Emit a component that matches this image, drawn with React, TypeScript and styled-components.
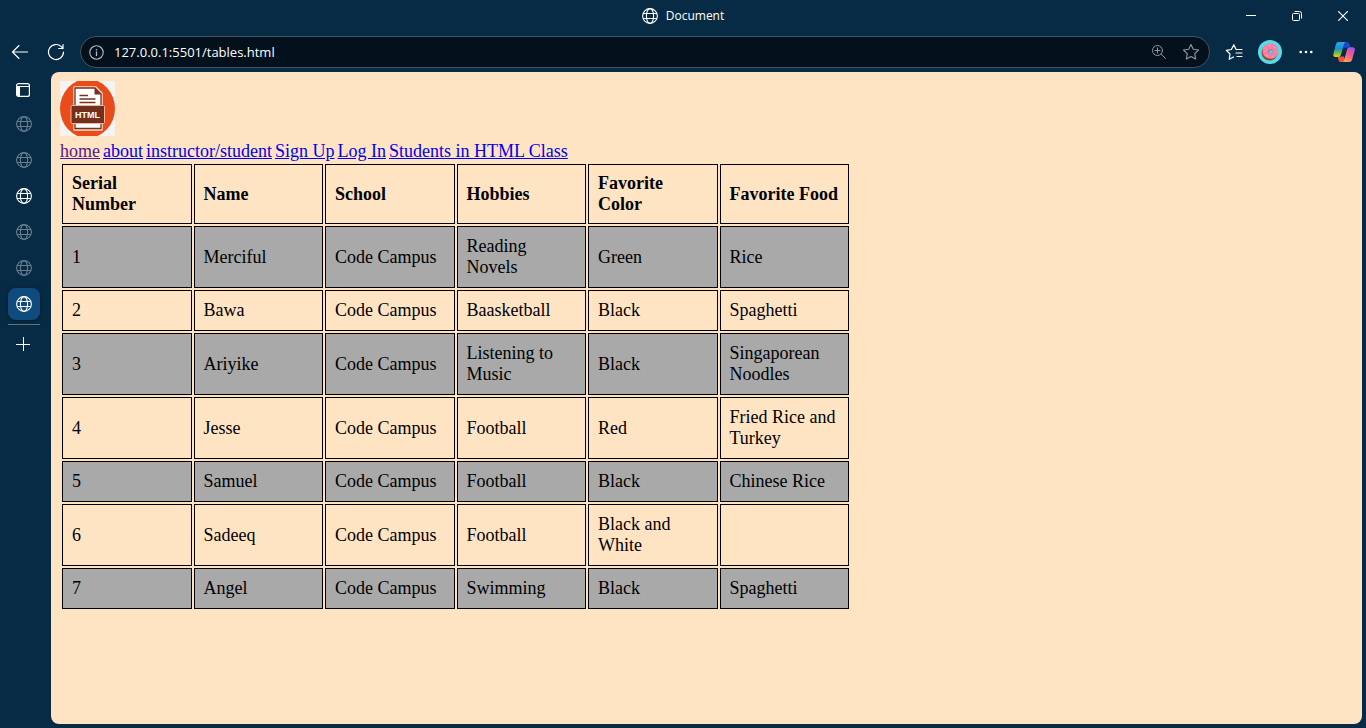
import React from "react";
import styled, { createGlobalStyle } from "styled-components";

const GlobalStyle = createGlobalStyle`
  *, *::before, *::after { box-sizing: border-box; }
  body {
    margin: 0;
    background: #082b45;
    font-family: "Open Sans", "Noto Sans", sans-serif;
  }
`;

const Window = styled.div`
  display: flex;
  flex-direction: column;
  min-height: 100vh;
  background: #082b45;
  color: #fff;
`;

const TitleBar = styled.header`
  display: grid;
  grid-template-columns: 1fr auto 1fr;
  align-items: center;
  height: 32px;
`;

const Title = styled.div`
  grid-column: 2;
  display: flex;
  align-items: center;
  gap: 8px;
  font-size: 12px;
  line-height: 16px;
`;

const WindowControls = styled.div`
  display: flex;
  justify-content: flex-end;
`;

const IconButton = styled.button<{ $width?: number; $height?: number; $dim?: boolean }>`
  display: flex;
  flex: none;
  align-items: center;
  justify-content: center;
  width: ${(p) => p.$width ?? 36}px;
  height: ${(p) => p.$height ?? 32}px;
  padding: 0;
  border: 0;
  background: none;
  color: ${(p) => (p.$dim ? "#90989f" : "#fff")};
`;

const Toolbar = styled.div`
  display: flex;
  align-items: center;
  height: 40px;
  padding: 0 2px;
`;

const AddressBar = styled.div`
  display: flex;
  flex: 1;
  align-items: center;
  min-width: 0;
  height: 32px;
  margin: 0 6px;
  padding: 0 2px 0 0;
  border: 1px solid #48535d;
  border-radius: 16px;
  background: #03111d;
`;

const AddressInput = styled.input`
  flex: 1;
  min-width: 0;
  padding: 0 3px;
  border: 0;
  outline: 0;
  background: none;
  color: #fff;
  font-family: inherit;
  font-size: 13px;
  line-height: 20px;
`;

const Body = styled.div`
  display: flex;
  flex: 1;
  padding: 0 4px 4px 0;
`;

const Sidebar = styled.nav`
  display: flex;
  flex: none;
  flex-direction: column;
  width: 51px;
  padding: 0 11px 0 8px;
`;

const TabList = styled.div`
  display: flex;
  flex-direction: column;
  gap: 4px;
  padding-bottom: 4px;
  border-bottom: 1px solid #647685;
`;

const Tab = styled.button<{ $state: "asleep" | "awake" | "active" }>`
  display: flex;
  align-items: center;
  justify-content: center;
  height: 32px;
  padding: 0;
  border: 0;
  border-radius: 8px;
  background: ${(p) => (p.$state === "active" ? "#0f4c7d" : "none")};
  box-shadow: ${(p) => (p.$state === "active" ? "0 1px 4px #041a2b" : "none")};
  color: ${(p) => (p.$state === "asleep" ? "#667e8f" : "#fff")};
`;

const Page = styled.main`
  flex: 1;
  min-width: 0;
  padding: 9px;
  border-radius: 8px;
  background: #ffe4c4;
  color: #000;
  font-family: "Liberation Serif", serif;
  font-size: 18px;
  line-height: 21px;
`;

const Logo = styled.svg`
  display: block;
  width: 55px;
  height: 55px;
  margin-bottom: 5px;
`;

const Links = styled.nav`
  display: flex;
  flex-wrap: wrap;
  gap: 3px;
`;

const PageLink = styled.a<{ $visited?: boolean }>`
  color: ${(p) => (p.$visited ? "#551a8b" : "#0000ee")};
  text-decoration: underline;
`;

const Table = styled.table`
  width: 791px;
  max-width: 100%;
  table-layout: fixed;
  border-collapse: separate;
  border-spacing: 2px;
  text-align: left;
`;

const HeadCell = styled.th`
  padding: 8px 8px 8px 9px;
  border: 1px solid #000;
  font-weight: 700;
`;

const Cell = styled.td`
  padding: 9px 8px 9px 9px;
  border: 1px solid #000;
`;

const Row = styled.tr`
  &:nth-child(odd) ${Cell} {
    background: #a9a9a9;
  }
`;

const GlobeIcon = () => (
  <svg width="16" height="16" viewBox="0 0 16 16" fill="none" stroke="currentColor" strokeWidth="1.1">
    <circle cx="8" cy="8" r="7.4" />
    <ellipse cx="8" cy="8" rx="3.6" ry="7.4" />
    <path d="M1 5.5h14M1 10.5h14" />
  </svg>
);

const BackIcon = () => (
  <svg width="18" height="16" viewBox="0 0 18 16" fill="none" stroke="currentColor" strokeWidth="1.1" strokeLinecap="round" strokeLinejoin="round">
    <path d="M16.5 8H1.5M8 1.500L1.500 8 8 14.500" />
  </svg>
);

const ReloadIcon = () => (
  <svg width="18" height="18" viewBox="0 0 18 18" fill="none" stroke="currentColor" strokeWidth="1.2" strokeLinecap="round" strokeLinejoin="round">
    <path d="M16.500 9A7.500 7.500 0 1 1 14.300 3.700L16 5.500M16 1.500v4h-4.300" />
  </svg>
);

const InfoIcon = () => (
  <svg width="15" height="15" viewBox="0 0 15 15" fill="none" stroke="#b8bec3" strokeLinecap="round">
    <circle cx="7.5" cy="7.5" r="6.7" strokeWidth="1.1" />
    <path d="M7.5 6.9v3.6" strokeWidth="1.3" />
    <circle cx="7.5" cy="4.7" r=".8" fill="#b8bec3" stroke="none" />
  </svg>
);

const ZoomIcon = () => (
  <svg width="16" height="16" viewBox="0 0 16 16" fill="none" stroke="currentColor" strokeLinecap="round">
    <circle cx="6.5" cy="6.5" r="5" />
    <path d="M6.5 4v5M4 6.5h5M10.200 10.200l4.300 4.300" />
  </svg>
);

const StarIcon = () => (
  <svg width="18" height="18" viewBox="0 0 18 18" fill="none" stroke="currentColor" strokeLinejoin="round" strokeWidth="1.1">
    <path d="M9 1.500l2.300 4.800 5.200.7-3.800 3.700.9 5.300L9 13.500 4.400 16l.9-5.300L1.500 7l5.200-.7z" />
  </svg>
);

const FavoritesIcon = () => (
  <svg width="18" height="18" viewBox="0 0 18 18" fill="none" stroke="currentColor" strokeWidth="1.2" strokeLinecap="round" strokeLinejoin="round">
    <path d="M8.500 14L4.200 16.300l.8-5.300L1.200 7.300l5.200-.8L8.800 1.700l2.300 4.800h5.900M11 10h6M12 13.500h5" />
  </svg>
);

const DonutAvatar = () => (
  <svg width="24" height="24" viewBox="0 0 24 24">
    <circle cx="12" cy="12" r="12" fill="#58dbe8" />
    <ellipse cx="11.6" cy="12.7" rx="8" ry="7.9" fill="#8e4d2a" />
    <path d="M4.500 11c0-4.500 3.400-7.500 8-7.500s7.800 3.300 7.800 7.800-3.100 7.500-7.200 7.400C8.500 18.700 4.500 16 4.500 11z" fill="#f47ea6" />
    <ellipse cx="12.7" cy="11.5" rx="2.6" ry="2.2" fill="#b9617a" />
    <ellipse cx="13" cy="11.9" rx="2.2" ry="1.800" fill="#4bd3df" />
    <path d="M7 8l1 .7M11 5.700l1-.3M16 7l.7.8M6.500 12l.5-1M17.500 12l.8-.5M8.500 15.500l1 .3M14 17l1-.5" stroke="#ffb4cb" strokeWidth=".8" strokeLinecap="round" />
  </svg>
);

const MoreIcon = () => (
  <svg width="14" height="4" viewBox="0 0 14 4" fill="currentColor">
    <circle cx="1.7" cy="2" r="1.3" />
    <circle cx="7" cy="2" r="1.3" />
    <circle cx="12.3" cy="2" r="1.3" />
  </svg>
);

const CopilotIcon = () => (
  <svg width="22" height="20" viewBox="0 0 22 20">
    <defs>
      <linearGradient id="coolRibbon" x1="0" y1="0" x2="0" y2="1">
        <stop offset="0" stopColor="#27a5ef" />
        <stop offset=".45" stopColor="#1d91cf" />
        <stop offset=".7" stopColor="#62b94e" />
        <stop offset="1" stopColor="#f4cd17" />
      </linearGradient>
      <linearGradient id="warmRibbon" x1=".7" y1="0" x2=".2" y2="1">
        <stop offset="0" stopColor="#a653e8" />
        <stop offset=".45" stopColor="#ef5b96" />
        <stop offset="1" stopColor="#ffa552" />
      </linearGradient>
    </defs>
    <path d="M9 0h5c1.600 0 2.200 1 2.600 2.300l.9 3.200h-3.500L10.500 6z" fill="#1748ce" />
    <path d="M5 14.500h6L12.500 20H8c-1.600 0-2.300-1-2.700-2.600z" fill="#ed533e" />
    <path d="M5.500 0h6.800c-.8.6-1.200 1.500-1.600 2.900L8.300 11.500C7.700 13.600 7 15 4.800 15H2.500C.5 15 0 13.500.5 11.500L2.700 3C3.200 1 4 0 5.500 0z" fill="url(#coolRibbon)" />
    <path d="M16.500 20H9.800c.9-.6 1.300-1.500 1.700-2.900l2.300-8.600C14.300 6.500 15 5.300 17 5.300h2.500c2 0 2.800 1.300 2.200 3.300L19.300 17c-.6 2-1.300 3-2.800 3z" fill="url(#warmRibbon)" />
  </svg>
);

const MinimizeIcon = () => (
  <svg width="10" height="10" viewBox="0 0 10 10" stroke="currentColor"><path d="M0 4.500h10" /></svg>
);

const RestoreIcon = () => (
  <svg width="10" height="10" viewBox="0 0 10 10" fill="none" stroke="currentColor">
    <rect x=".5" y="2.500" width="7" height="7" rx="1" />
    <path d="M2.500.5H7.500a2 2 0 0 1 2 2v5" />
  </svg>
);

const CloseIcon = () => (
  <svg width="10" height="10" viewBox="0 0 10 10" stroke="currentColor" strokeWidth="1.1"><path d="M0 0l10 10M10 0L0 10" /></svg>
);

const PanelIcon = () => (
  <svg width="14" height="14" viewBox="0 0 14 14" fill="none" stroke="currentColor">
    <rect x=".6" y=".6" width="12.8" height="12.8" rx="2" strokeWidth="1.2" />
    <path d="M4 3.500h9.500" />
    <path d="M1 3h3v10.500H2.500A1.500 1.500 0 0 1 1 12z" fill="currentColor" stroke="none" />
  </svg>
);

const PlusIcon = () => (
  <svg width="14" height="14" viewBox="0 0 14 14" stroke="currentColor"><path d="M0 7.500h14M7.500 0v14" /></svg>
);

const HtmlLogo = () => (
  <Logo viewBox="0 0 55 55" role="img" aria-label="HTML document">
    <rect width="55" height="55" fill="#f5f3f2" />
    <ellipse cx="27.5" cy="27.5" rx="27.5" ry="29.5" fill="#e84c1a" />
    <path d="M14.500 6.500h21l6 6V48.500h-27z" fill="#fff" stroke="#ffd8c5" strokeWidth="2.5" strokeLinejoin="round" />
    <path d="M15 7h20l6 6v34.500H15z" fill="#fff" stroke="#74301d" strokeWidth="1.3" />
    <path d="M34.500 7v6.500H41z" fill="#74301d" />
    <path d="M20 14.500h7.500M20 18h15M20 21.500h15" stroke="#74301d" strokeWidth="1.3" strokeLinecap="round" />
    <rect x="11" y="24.500" width="33.500" height="18" rx="1" fill="#74301d" stroke="#f4b69e" />
    <text x="27.5" y="37" fill="#fff" fontFamily="Liberation Sans, sans-serif" fontSize="9" fontWeight="700" textAnchor="middle">HTML</text>
  </Logo>
);

const tabs: Array<"asleep" | "awake" | "active"> = ["asleep", "asleep", "awake", "asleep", "asleep", "active"];

const links = ["home", "about", "instructor/student", "Sign Up", "Log In", "Students in HTML Class"];

const headings = ["Serial Number", "Name", "School", "Hobbies", "Favorite Color", "Favorite Food"];

const students = [
  ["1", "Merciful", "Code Campus", "Reading Novels", "Green", "Rice"],
  ["2", "Bawa", "Code Campus", "Baasketball", "Black", "Spaghetti"],
  ["3", "Ariyike", "Code Campus", "Listening to Music", "Black", "Singaporean Noodles"],
  ["4", "Jesse", "Code Campus", "Football", "Red", "Fried Rice and Turkey"],
  ["5", "Samuel", "Code Campus", "Football", "Black", "Chinese Rice"],
  ["6", "Sadeeq", "Code Campus", "Football", "Black and White", ""],
  ["7", "Angel", "Code Campus", "Swimming", "Black", "Spaghetti"],
];

export default function App() {
  return (
    <Window>
      <GlobalStyle />
      <TitleBar>
        <Title><GlobeIcon />Document</Title>
        <WindowControls>
          <IconButton $width={46} aria-label="Minimize"><MinimizeIcon /></IconButton>
          <IconButton $width={46} aria-label="Restore"><RestoreIcon /></IconButton>
          <IconButton $width={46} aria-label="Close"><CloseIcon /></IconButton>
        </WindowControls>
      </TitleBar>
      <Toolbar>
        <IconButton aria-label="Back"><BackIcon /></IconButton>
        <IconButton aria-label="Refresh"><ReloadIcon /></IconButton>
        <AddressBar>
          <IconButton $width={30} $height={28} aria-label="View site information"><InfoIcon /></IconButton>
          <AddressInput aria-label="Address" defaultValue="127.0.0.1:5501/tables.html" spellCheck={false} />
          <IconButton $width={32} $height={28} $dim aria-label="Zoom"><ZoomIcon /></IconButton>
          <IconButton $width={32} $height={28} $dim aria-label="Add to favorites"><StarIcon /></IconButton>
        </AddressBar>
        <IconButton aria-label="Favorites"><FavoritesIcon /></IconButton>
        <IconButton aria-label="Profile"><DonutAvatar /></IconButton>
        <IconButton aria-label="Settings and more"><MoreIcon /></IconButton>
        <IconButton $width={40} aria-label="Copilot"><CopilotIcon /></IconButton>
      </Toolbar>
      <Body>
        <Sidebar aria-label="Tabs">
          <IconButton $width={30} $height={36} aria-label="Tab actions"><PanelIcon /></IconButton>
          <TabList>
            {tabs.map((state, i) => (
              <Tab key={i} $state={state} aria-label={`Tab ${i + 1}`}><GlobeIcon /></Tab>
            ))}
          </TabList>
          <IconButton $width={30} $height={38} aria-label="New tab"><PlusIcon /></IconButton>
        </Sidebar>
        <Page>
          <HtmlLogo />
          <Links aria-label="Site">
            {links.map((label, i) => (
              <PageLink key={label} href="#" $visited={i === 0}>{label}</PageLink>
            ))}
          </Links>
          <Table>
            <thead>
              <tr>
                {headings.map((heading) => <HeadCell key={heading} scope="col">{heading}</HeadCell>)}
              </tr>
            </thead>
            <tbody>
              {students.map((student) => (
                <Row key={student[0]}>
                  {student.map((value, i) => <Cell key={i}>{value}</Cell>)}
                </Row>
              ))}
            </tbody>
          </Table>
        </Page>
      </Body>
    </Window>
  );
}
